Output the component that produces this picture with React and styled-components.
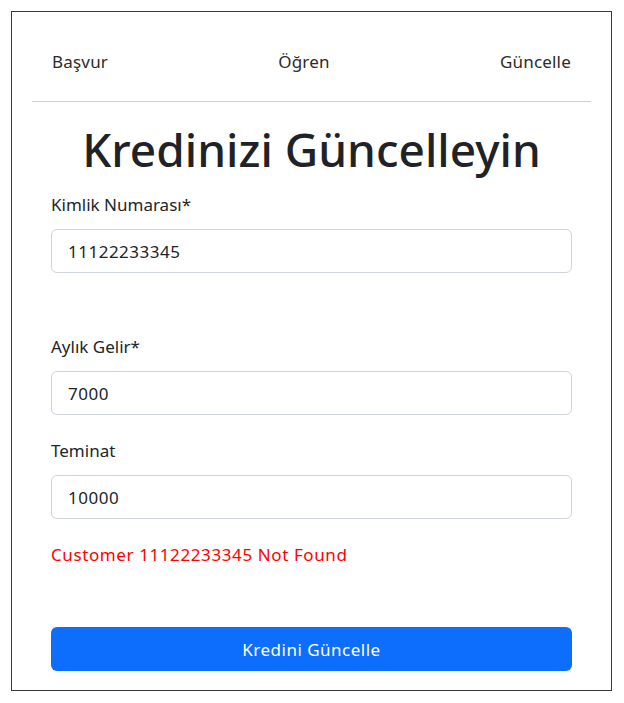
import React from 'react';
import styled, { createGlobalStyle } from 'styled-components';

const GlobalStyle = createGlobalStyle`
  body {
    margin: 0;
    background: #fff;
    font-family: "Noto Sans", "Open Sans", sans-serif;
    color: #212529;
  }
`;

const Frame = styled.div`
  box-sizing: border-box;
  margin: 11px 0 0 11px;
  width: 601px;
  height: 680px;
  border: 1.5px solid #3a3a3a;
  padding: 0 20px;
`;

const Nav = styled.nav`
  display: flex;
  justify-content: space-between;
  align-items: center;
  height: 89px;
  padding: 0 20px;
  border-bottom: 1px solid #cfcfcf;
`;

const NavLink = styled.a`
  font-size: 17px;
  letter-spacing: 0.2px;
  color: #2b2b2b;
  text-decoration: none;
  padding-top: 9px;
`;

const Form = styled.form`
  display: flex;
  flex-direction: column;
  padding: 0 19px;
`;

const Title = styled.h1`
  margin: 20px 0 16px;
  text-align: center;
  font-size: 46px;
  font-weight: 500;
  line-height: 1.2;
  color: #1f2226;
`;

const Label = styled.label`
  display: block;
  font-size: 17px;
  color: #212529;
  margin-bottom: 13px;
`;

const Field = styled.div`
  margin-bottom: ${p => p.gap}px;
`;

const Input = styled.input`
  box-sizing: border-box;
  width: 100%;
  height: 44px;
  padding: 0 16px;
  font-family: inherit;
  font-size: 17px;
  letter-spacing: 0.5px;
  color: #212529;
  border: 1px solid #ced4da;
  border-radius: 6px;
  background: #fff;
`;

const Error = styled.p`
  margin: 0 0 61px;
  font-size: 17px;
  letter-spacing: 0.6px;
  color: #f00;
`;

const Button = styled.button`
  height: 44px;
  width: 100%;
  border: none;
  border-radius: 6px;
  background: #0d6efd;
  color: #fff;
  font-family: inherit;
  font-size: 17px;
  letter-spacing: 0.5px;
  cursor: pointer;
`;

const fields = [
  { label: 'Kimlik Numarası*', value: '11122233345', gap: 62 },
  { label: 'Aylık Gelir*', value: '7000', gap: 24 },
  { label: 'Teminat', value: '10000', gap: 24 },
];

const App = () => (
  <>
    <GlobalStyle />
    <Frame>
      <Nav>
        <NavLink href="#">Başvur</NavLink>
        <NavLink href="#">Öğren</NavLink>
        <NavLink href="#">Güncelle</NavLink>
      </Nav>
      <Form onSubmit={e => e.preventDefault()}>
        <Title>Kredinizi Güncelleyin</Title>
        {fields.map(f => (
          <Field key={f.label} gap={f.gap}>
            <Label>{f.label}</Label>
            <Input type="text" defaultValue={f.value} />
          </Field>
        ))}
        <Error>Customer 11122233345 Not Found</Error>
        <Button type="submit">Kredini Güncelle</Button>
      </Form>
    </Frame>
  </>
);

export default App;
